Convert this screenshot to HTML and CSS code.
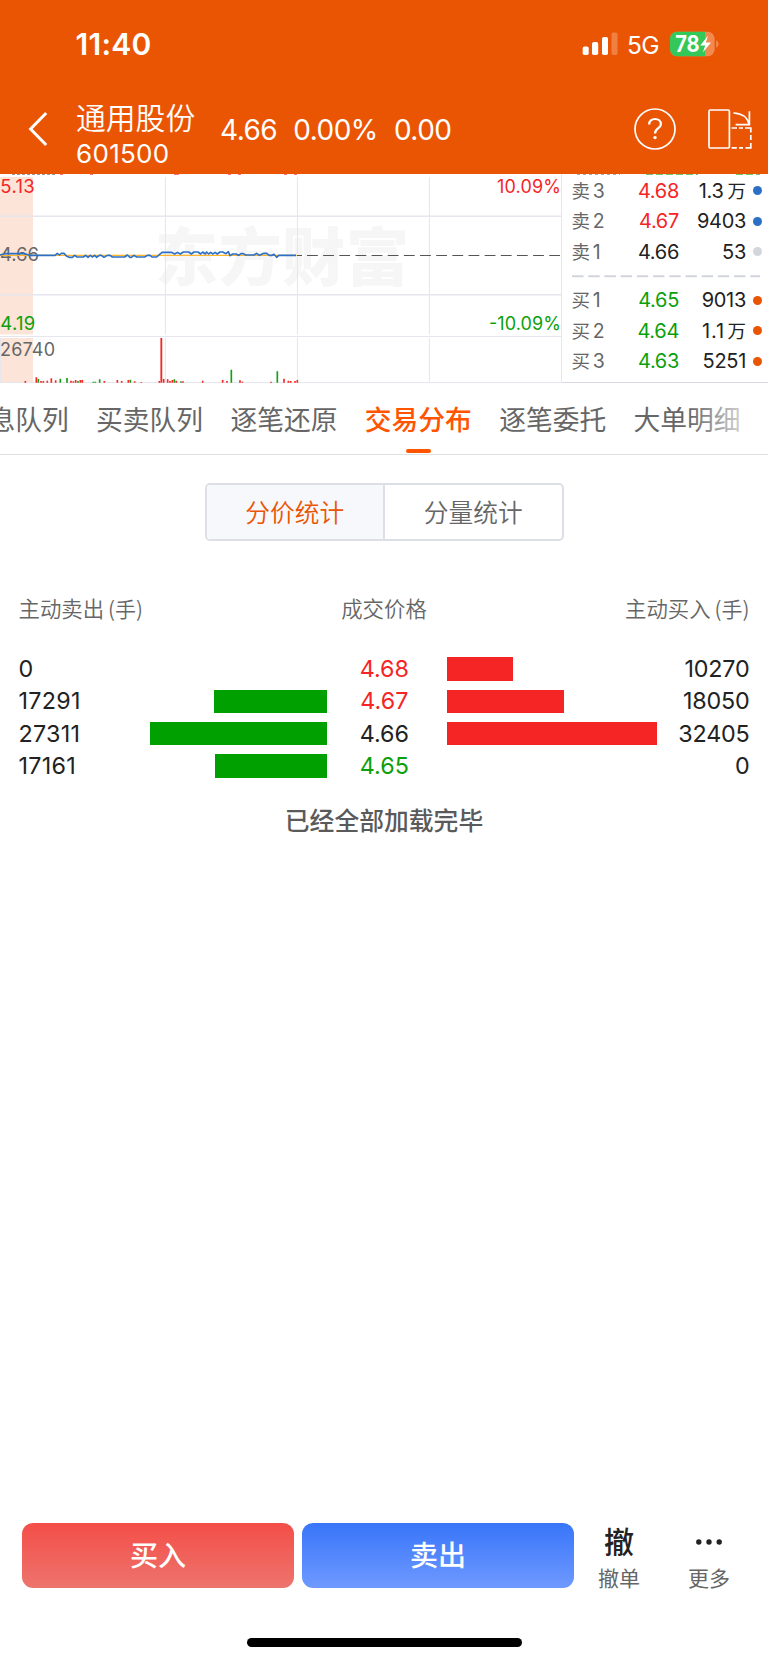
FILE: index.html
```html
<!DOCTYPE html>
<html lang="zh-CN">
<head>
<meta charset="utf-8">
<title>通用股份 601500</title>
<link rel="stylesheet" href="styles.css">
</head>
<body>
<div class="screen">
  <header class="header">
    <div class="status">
      <span class="clock">11:40</span>
      <div class="status-right">
        <svg class="signal" width="36" height="24" viewBox="0 0 36 24" fill="#fff">
          <rect x="0.7" y="14.5" width="6" height="8.5" rx="1.8"/>
          <rect x="10" y="10" width="6.2" height="13" rx="1.8"/>
          <rect x="20" y="5" width="6" height="18" rx="1.8"/>
          <rect x="29.5" y="0.5" width="6" height="22.5" rx="1.8" opacity=".25"/>
        </svg>
        <span class="network">5G</span>
        <svg class="battery" width="50" height="26" viewBox="0 0 50 26">
          <rect x="0" y="0.8" width="44.6" height="24.4" rx="7" fill="#f28a50"/>
          <path d="M7 .8H35V25.2H7A7 7 0 0 1 0 18.2V7.8A7 7 0 0 1 7 .8Z" fill="#34c759"/>
          <path d="M46.2 9.2Q48.6 10.2 48.6 13T46.2 16.8Z" fill="#f28a50"/>
          <text class="battery-level" x="5.2" y="21.2" textLength="24.5" lengthAdjust="spacingAndGlyphs">78</text>
          <path d="M38 4.8 30.2 14.6H35.2L32.8 21.6 41 11.6H35.8Z" fill="#fff"/>
        </svg>
      </div>
    </div>
    <div class="nav">
      <svg class="back" width="20" height="36" viewBox="0 0 20 36" fill="none" stroke="#fff" stroke-width="3"><path d="M18.2 2 2.6 18 18.2 34"/></svg>
      <div class="stock">
        <span class="stock-name">通用股份</span>
        <span class="stock-code">601500</span>
      </div>
      <div class="quote"><span>4.66</span><span>0.00%</span><span>0.00</span></div>
      <svg class="help" width="42" height="42" viewBox="0 0 42 42" fill="none" stroke="#fff">
        <circle cx="21" cy="21" r="20" stroke-width="1.7"/>
        <path d="M15.2 16.4C15.2 12.8 17.7 11 21 11S26.9 13 26.9 16.2C26.9 20.2 21 20.4 21 25.6" stroke-width="2.2"/>
        <circle cx="21" cy="29.6" r="1.7" fill="#fff" stroke="none"/>
      </svg>
      <svg class="rotate" width="44" height="40" viewBox="0 0 44 40" fill="none" stroke="#fff" stroke-width="1.7">
        <rect x="1" y="1" width="20.4" height="38" rx="1.3"/>
        <path d="M25.4 4C34 4.4 39.6 8.5 41 15.2M41.4 2.3V15.6H27.6"/>
        <path d="M23.6 19H29M31 19H35M37 19H42.8V23.5M42.8 26V31M42.8 34V38.8H37.5M35 38.8H31M28.8 38.8H23.6"/>
      </svg>
    </div>
  </header>

  <section class="market">
    <svg class="chart" width="562" height="210" viewBox="0 174 562 210">
      <g fill="#fce4d8"><rect x="0" y="177" width="33" height="157.5"/><rect x="0" y="338" width="33" height="44.5"/></g>
      <text class="watermark" x="155" y="279.5" textLength="254">东方财富</text>
      <g stroke="#e5e6ee" fill="none">
        <path d="M0 216.2H561M0 294.8H561" stroke-width="1.5"/>
        <path d="M0 336.5H561M0 382.6H562" stroke-width="1"/>
        <path d="M165.4 177V334.5M165.4 338V382M297.4 177V334.5M297.4 338V382M429.4 177V334.5M429.4 338V382M561.5 174V383M.5 338V382" stroke-width="1"/>
      </g>
      <g class="clipped"><path d="M12 174.5H57" stroke="#999" stroke-dasharray="3 2"/><path d="M60 174.5h3M90 174.5h3M174 174.5h5M228 174.5h3M238 174.5h3M284 174.5h3M294 174.5h3" stroke="#f57a7a"/></g>
      <path d="M297 255.5H302M307 255.5H560" stroke="#555" stroke-width="1.2" stroke-dasharray="10.8 5.35"/>
      <text class="axis grey" x="0" y="261" textLength="39">4.66</text>
      <g transform="translate(0 165) scale(.33333)" fill="none" stroke-linejoin="round">
        <path d="M0 271H890" stroke="#ffb52b" stroke-width="3.5"/>
        <path d="M0 270 15 266H75L88 271H165L172 265 178 270 184 265H192L200 274 208 277H217L224 271 231 276H250L257 271 264 277 271 271 277 276 284 271 290 277 298 271H304L312 277 322 271H330L337 276H374L382 270 390 277H394L402 271 410 276H434L442 271H450L456 276H470L486 262H515L524 267 532 262 541 267 550 261H566L574 267 582 261H594L602 267 608 261 616 267 620 261 626 267 632 262 639 267 645 262 652 267 660 261H668L678 266 685 260 690 272 698 267H708L716 271 723 266H730L737 270H762L770 265 778 271 792 265H800L808 271H816L822 268 830 277 836 271H888" stroke="#2c70c5" stroke-width="4.8"/>
      </g>
      <g transform="translate(0 165) scale(.33333)" fill="none" stroke-width="5">
        <path d="M484 519V653" stroke="#f52525" stroke-width="5.5"/>
        <path d="M76 648v5M109 637v16M123 648v5M130 648v5M142 647v6M154 640v13M167 646v7M213 647v6M220 649v4M227 645v8M241 645v8M247 645v8M313 648v5M352 645v8M365 648v5M385 645v8M404 649v4M424 651v2M478 648v5M491 642v11M503 643v10M510 648v5M517 645v8M529 647v6M549 649v4M608 647v6M668 645v8M681 648v5M720 646v7M727 650v3M813 650v3M852 641v12M865 647v6M872 648v5M885 648v5M892 645v8" stroke="#f52525"/>
        <path d="M115 642v11M181 641v12M201 639v14M234 648v5M280 650v3M286 650v3M299 643v10M391 644v9M523 643v10M543 649v4M694 614v39M832 619v34" stroke="#13a013"/>
      </g>
      <text class="axis red" x=".3" y="192.6" textLength="34.5">5.13</text>
      <text class="axis green" x=".3" y="330" textLength="35">4.19</text>
      <text class="axis grey small" x="0" y="355.9" textLength="55">26740</text>
      <text class="axis red small" x="497" y="192.6" textLength="64">10.09%</text>
      <text class="axis green small" x="489" y="330" textLength="72">-10.09%</text>
    </svg>
    <div class="book">
      <svg class="book-edge" width="190" height="2" viewBox="0 0 190 2"><path d="M5 .5H48" stroke="#aaa" stroke-dasharray="3 3"/><path d="M74 .5H126M164 .5H188" stroke="#6cc66c" stroke-dasharray="7 3"/></svg>
      <div class="book-row"><span class="side">卖<b>3</b></span><span class="price red">4.68</span><span class="volume">1.3<i>万</i></span><span class="dot blue"></span></div>
      <div class="book-row"><span class="side">卖<b>2</b></span><span class="price red">4.67</span><span class="volume">9403</span><span class="dot blue"></span></div>
      <div class="book-row"><span class="side">卖<b>1</b></span><span class="price">4.66</span><span class="volume">53</span><span class="dot"></span></div>
      <svg class="divider" width="188" height="18" viewBox="0 0 188 18"><path d="M0 9.2H188" stroke="#d2d5dc" stroke-width="2" stroke-dasharray="11.5 4.7"/></svg>
      <div class="book-row"><span class="side">买<b>1</b></span><span class="price green">4.65</span><span class="volume">9013</span><span class="dot orange"></span></div>
      <div class="book-row"><span class="side">买<b>2</b></span><span class="price green">4.64</span><span class="volume wide">1.1<i>万</i></span><span class="dot orange"></span></div>
      <div class="book-row"><span class="side">买<b>3</b></span><span class="price green">4.63</span><span class="volume">5251</span><span class="dot orange"></span></div>
    </div>
  </section>

  <nav class="tabs">
    <span class="tab">息队列</span><span class="tab">买卖队列</span><span class="tab">逐笔还原</span><span class="tab active">交易分布</span><span class="tab">逐笔委托</span><span class="tab">大单明细</span>
  </nav>

  <main class="content">
    <div class="segment"><span class="seg selected">分价统计</span><span class="seg">分量统计</span></div>
    <div class="table-head"><span>主动卖出<em>(手)</em></span><span>成交价格</span><span>主动买入<em>(手)</em></span></div>
    <div class="table">
      <div class="row"><span class="sold">0</span><div class="sell"></div><span class="deal red">4.68</span><div class="buy"><div class="bar" style="width:66.3px"></div></div><span class="num">10270</span></div>
      <div class="row"><span class="sold">17291</span><div class="sell"><div class="bar" style="width:112.3px"></div></div><span class="deal red">4.67</span><div class="buy"><div class="bar" style="width:116.8px"></div></div><span class="num">18050</span></div>
      <div class="row"><span class="sold">27311</span><div class="sell"><div class="bar" style="width:177px"></div></div><span class="deal">4.66</span><div class="buy"><div class="bar" style="width:209.7px"></div></div><span class="num">32405</span></div>
      <div class="row"><span class="sold">17161</span><div class="sell"><div class="bar" style="width:111.3px"></div></div><span class="deal green">4.65</span><div class="buy"></div><span class="num">0</span></div>
    </div>
    <p class="loaded">已经全部加载完毕</p>
  </main>

  <footer class="footer">
    <div class="actions">
      <div class="button buy-button">买入</div>
      <div class="button sell-button">卖出</div>
      <div class="action"><span class="action-icon">撤</span><span>撤单</span></div>
      <div class="action"><span class="action-icon"><svg width="28" height="8" viewBox="0 0 28 8" fill="#222"><circle cx="3.8" cy="4" r="2.7"/><circle cx="14" cy="4" r="2.7"/><circle cx="24.2" cy="4" r="2.7"/></svg></span><span>更多</span></div>
    </div>
    <div class="home"></div>
  </footer>
</div>
</body>
</html>
```
FILE: styles.css
```css
* { box-sizing: border-box; }
body { margin: 0; background: #fff; font-family: Inter, "Noto Sans CJK SC", sans-serif; color: #222; }
b, i, em { font-weight: inherit; font-style: normal; }
svg { display: block; flex: none; }
.screen { width: 768px; height: 1662px; display: flex; flex-direction: column; overflow: hidden; }
.red { color: #f52525; fill: #f52525; }
.green { color: #0ba00b; fill: #0ba00b; }
.grey { fill: #666; }

.header { height: 174px; flex: none; background: #ea5504; color: #fff; }
.status { height: 88px; padding: 0 48.5px 0 75.5px; display: flex; justify-content: space-between; }
.clock { font-size: 30px; font-weight: 600; line-height: 88px; letter-spacing: .3px; }
.status-right { display: flex; padding-top: 30.5px; }
.signal { margin-top: 1.5px; }
.network { width: 34px; margin: -1px 8.5px 0 9.5px; font-size: 24.5px; line-height: 30px; letter-spacing: -.6px; }
.battery-level { font: 700 22.5px Inter, sans-serif; fill: #fff; }
.nav { height: 86px; padding: 0 16px 0 28px; display: flex; align-items: center; }
.back { margin-top: -4px; }
.stock { width: 144px; margin-left: 28px; padding-top: 9px; display: flex; flex-direction: column; }
.stock-name { font-size: 29.8px; line-height: 37px; font-weight: 350; white-space: nowrap; }
.stock-code { font-size: 26px; line-height: 34px; letter-spacing: .3px; }
.quote { flex: 1; display: flex; gap: 16px; font-size: 28px; line-height: 40px; letter-spacing: -.5px; margin-top: -3px; }
.help { margin-top: -4px; }
.rotate { margin: -4px 0 0 32px; }

.market { height: 209px; flex: none; display: flex; }
.chart { flex: none; }
.watermark { font: 900 63px "Noto Sans CJK SC", sans-serif; fill: #f6f6f7; }
.axis { font: 18.5px Inter, sans-serif; }
.axis.small { font-size: 18px; }
.book { flex: 1; border-bottom: 1px solid #d8dae2; padding: 0 7px 0 9.5px; }
.book-edge { margin-bottom: -.5px; }
.book-row { height: 30.5px; display: flex; align-items: center; font-size: 20px; line-height: 30px; letter-spacing: -.3px; }
.side { width: 48px; color: #666; font-size: 18.5px; display: flex; gap: 3px; }
.side b { font-size: 19.5px; }
.price { width: 59.5px; text-align: right; }
.volume { width: 67px; text-align: right; }
.volume.wide { letter-spacing: .9px; }
.volume i { font-size: 18.5px; margin-left: 4px; letter-spacing: 0; }
.wide i { margin-left: 2.5px; }
.dot { width: 9px; height: 9px; margin-left: 7px; border-radius: 50%; background: #d3d6dd; }
.dot.blue { background: #2c70c5; }
.dot.orange { background: #ea5504; }

.tabs { height: 72px; flex: none; border-bottom: 1px solid #dfe1e5; display: flex; gap: 27.4px; padding-left: 96px; font-size: 26.75px; line-height: 74px; color: #666; white-space: nowrap; overflow: hidden; position: relative; }
.tabs::after { content: ""; position: absolute; right: 0; top: 0; width: 80px; height: 70px; background: linear-gradient(90deg, rgba(255,255,255,0), #fff 95%); }
.tab { flex: none; width: 107px; }
.tab:first-child { width: 80.1px; margin-left: -107.5px; }
.tab.active { color: #ff5500; font-weight: 500; position: relative; }
.tab.active::after { content: ""; position: absolute; left: 41px; top: 66px; width: 25px; height: 4px; border-radius: 2px; background: #ff5500; }

.content { flex: 1; display: flex; flex-direction: column; }
.segment { width: 359px; height: 58px; margin: 28px 0 0 204.5px; border: 2px solid #dcdfe5; border-radius: 5px; display: flex; overflow: hidden; }
.seg { flex: 1; text-align: center; font-size: 24.7px; line-height: 56px; color: #666; font-weight: 350; }
.seg.selected { background: #f7f8fb; color: #ea5504; border-right: 2px solid #dcdfe5; }
.table-head { display: grid; grid-template-columns: 1fr 100px 1fr; height: 30px; margin-top: 53px; padding: 0 18.5px; font-size: 21.4px; line-height: 30px; color: #666; white-space: nowrap; font-weight: 350; }
.table-head span:nth-child(2) { text-align: center; }
.table-head span:nth-child(3) { text-align: right; }
.table-head em { font-family: "Noto Sans CJK SC", sans-serif; margin-left: 4px; font-size: 21px; line-height: 28px; }
.table { margin-top: 29px; }
.row { height: 32.3px; padding: 0 18.5px; display: grid; grid-template-columns: 120.5px 187.7px 120.3px 210px 92.5px; align-items: center; font-size: 23.3px; line-height: 32px; }
.bar { height: 23.4px; }
.sold { letter-spacing: .3px; }
.sell { display: flex; justify-content: flex-end; }
.sell .bar { background: #00a000; }
.buy .bar { background: #f52525; }
.deal { text-align: center; padding-right: 5px; }
.num { text-align: right; letter-spacing: -.2px; }
.loaded { margin: 21px 0 0; text-align: center; font-size: 24.8px; line-height: 36px; font-weight: 500; color: #5a5a5a; }

.footer { height: 139px; flex: none; }
.actions { display: flex; height: 65px; padding-left: 22px; }
.button { width: 272px; height: 65px; margin-right: 8px; border-radius: 11px; color: #fff; font-size: 28px; line-height: 67px; font-weight: 500; text-align: center; }
.buy-button { background: linear-gradient(#f44e48, #ed746d); }
.sell-button { background: linear-gradient(#3875f9, #6f99ff); }
.action { width: 90px; margin-left: -8px; margin-right: 8px; display: flex; flex-direction: column; align-items: center; font-size: 21px; line-height: 35px; color: #666; }
.action-icon { height: 38px; flex: none; display: flex; align-items: center; font-size: 30px; line-height: 38px; font-weight: 500; color: #222; }
.home { width: 275px; height: 9px; border-radius: 5px; margin: 50px 0 0 247px; background: #000; }
```
